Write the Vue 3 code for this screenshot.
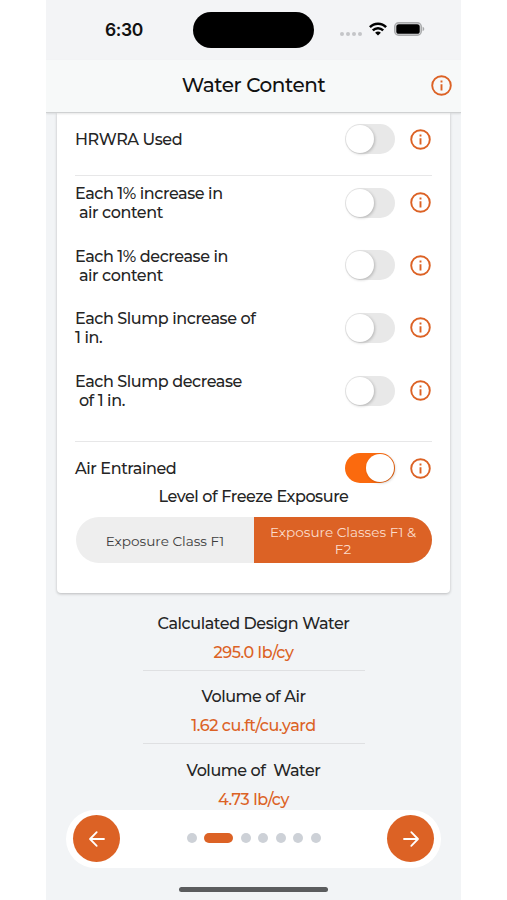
<script setup>
const groups = [
  { name: 'first', rows: [{ lines: ['HRWRA Used'], on: false }] },
  {
    name: 'adjust',
    rows: [
      { lines: ['Each 1% increase in', ' air content'], on: false },
      { lines: ['Each 1% decrease in', ' air content'], on: false },
      { lines: ['Each Slump increase of', '1 in.'], on: false },
      { lines: ['Each Slump decrease', ' of 1 in.'], on: false },
    ],
  },
  { name: 'air', rows: [{ lines: ['Air Entrained'], on: true }] },
]
const results = [
  { label: 'Calculated Design Water', value: '295.0 lb/cy' },
  { label: 'Volume of Air', value: '1.62 cu.ft/cu.yard' },
  { label: 'Volume of  Water', value: '4.73 lb/cy' },
]
</script>

<template>
  <div class="phone">
    <div class="status">
      <span class="time">6:30</span>
      <div class="island"></div>
      <div class="indicators">
        <span class="cell"><i v-for="n in 4" :key="n"></i></span>
        <svg class="wifi" width="18" height="14" viewBox="0 0 18 14">
          <path d="M.9 5.100C5.200.5 12.800.5 17.100 5.100" fill="none" stroke="#000" stroke-width="2.500" />
          <path d="M3.800 8.400c2.900-2.900 7.500-2.900 10.400 0" fill="none" stroke="#000" stroke-width="2.400" />
          <path d="M6.100 10.700c1.700-1.500 4.100-1.500 5.800 0L9 13.600z" fill="#000" />
        </svg>
        <svg class="battery" width="31" height="14" viewBox="0 0 31 14">
          <rect x=".7" y=".7" width="26.600" height="12.600" rx="4" fill="#d9dadc" stroke="#a9aaac" stroke-width="1.400" />
          <rect x="2.300" y="2.200" width="23.400" height="9.600" rx="2.600" fill="#000" />
          <path d="M28.600 4.800c2.200.7 2.200 3.700 0 4.400z" fill="#a7a8aa" />
        </svg>
      </div>
    </div>

    <header class="header">
      <h1>Water Content</h1>
      <svg class="info" viewBox="0 0 21 21">
        <circle cx="10.500" cy="10.500" r="9.300" />
        <path d="M10.500 9.200v6.200M10.500 5.500v2" />
      </svg>
    </header>

    <main class="main">
      <section class="card">
        <div v-for="g in groups" :key="g.name" class="group" :class="g.name">
          <div v-for="(r, i) in g.rows" :key="i" class="row">
            <div class="label">
              <div v-for="l in r.lines" :key="l">{{ l }}</div>
            </div>
            <div class="toggle" :class="{ on: r.on }"><div class="knob"></div></div>
            <svg class="info" viewBox="0 0 21 21">
              <circle cx="10.500" cy="10.500" r="9.300" />
              <path d="M10.500 9.200v6.200M10.500 5.500v2" />
            </svg>
          </div>
        </div>
        <div class="level">Level of Freeze Exposure</div>
        <div class="segments">
          <div class="segment one">Exposure Class F1</div>
          <div class="segment active">Exposure Classes F1 &amp;<br />F2</div>
        </div>
      </section>

      <section class="results">
        <div v-for="r in results" :key="r.label" class="result">
          <div class="name">{{ r.label }}</div>
          <div class="value">{{ r.value }}</div>
        </div>
      </section>
    </main>

    <nav class="nav">
      <button class="round">
        <svg width="18" height="18" viewBox="0 0 18 18"><path d="M16 9H2.300M8.700 2.200L2 9l6.700 6.800" /></svg>
      </button>
      <div class="dots">
        <i v-for="n in 7" :key="n" :class="{ current: n === 2 }"></i>
      </div>
      <button class="round">
        <svg width="18" height="18" viewBox="0 0 18 18"><path d="M2 9h13.700M9.300 2.200L16 9l-6.700 6.800" /></svg>
      </button>
    </nav>
    <div class="home"></div>
  </div>
</template>

<style>
body {
  background: #fff;
  overflow: hidden;
}
</style>

<style scoped>
* {
  box-sizing: border-box;
}
.phone {
  width: 415px;
  height: 900px;
  margin-left: 46px;
  background: #f2f4f6;
  font-family: Montserrat, Inter, "Liberation Sans", sans-serif;
  color: #252525;
  display: flex;
  flex-direction: column;
  overflow: hidden;
}
.status {
  height: 60px;
  flex: none;
  display: grid;
  grid-template-columns: 147px 121px 1fr;
  align-items: center;
  background: #f3f4f6;
}
.time {
  padding-left: 59px;
  font: 600 17.500px/22px Inter, sans-serif;
  letter-spacing: -0.4px;
  color: #111;
}
.island {
  height: 36px;
  border-radius: 18px;
  background: #000;
}
.indicators {
  display: flex;
  align-items: center;
  padding-left: 26px;
  padding-bottom: 2px;
}
.cell {
  display: flex;
  gap: 2px;
  padding-top: 9px;
  margin-right: 7px;
}
.cell i {
  width: 4px;
  height: 4px;
  border-radius: 50%;
  background: #c4c5c8;
}
.battery {
  margin-left: 7px;
}
.header {
  height: 53px;
  flex: none;
  display: grid;
  grid-template-columns: 1fr auto 1fr;
  align-items: center;
  padding: 0 9px 2px;
  background: #f7f9f9;
  border-bottom: 1px solid #cfd1d2;
  box-shadow: 0 1px 2px rgba(0, 0, 0, 0.1);
  z-index: 1;
}
h1 {
  grid-column: 2;
  margin: 0;
  font-size: 20px;
  font-weight: 500;
  line-height: 24px;
  letter-spacing: -0.45px;
  color: #111;
}
.header .info {
  justify-self: end;
}
.info {
  width: 21px;
  height: 21px;
  flex: none;
  fill: none;
  stroke: #dc6225;
  stroke-width: 1.900;
}
.card {
  height: 480px;
  margin: 0 11px;
  padding: 0 18px;
  background: #fff;
  border-radius: 0 0 4px 4px;
  box-shadow: 0 1px 3px rgba(0, 0, 0, 0.24);
}
.group.first {
  height: 63px;
  padding-top: 11px;
  border-bottom: 1px solid #e7e7e8;
}
.group.adjust {
  height: 266px;
  padding-top: 6.600px;
  border-bottom: 1px solid #e7e7e8;
  display: flex;
  flex-direction: column;
  gap: 22.700px;
}
.group.air {
  padding-top: 11px;
}
.row {
  display: flex;
  align-items: center;
  min-height: 30px;
}
.adjust .row {
  height: 40px;
}
.label {
  flex: 1;
  font-size: 16px;
  font-weight: 500;
  line-height: 19.500px;
  letter-spacing: -0.42px;
  white-space: pre;
  padding-top: 1.500px;
}
.adjust .label {
  line-height: 19px;
  padding-top: 0.500px;
}
.toggle {
  width: 50px;
  height: 30px;
  border-radius: 15px;
  padding: 1px;
  background: #e8e8e8;
  margin-right: 15px;
  display: flex;
}
.row .info {
  margin-right: 1.500px;
}
.toggle.on {
  background: #fb6a0e;
  justify-content: flex-end;
}
.knob {
  width: 28px;
  height: 28px;
  border-radius: 50%;
  background: #fff;
  box-shadow: 1px 1px 3px rgba(0, 0, 0, 0.22);
}
.level {
  margin-top: 3px;
  height: 20px;
  line-height: 22px;
  font-size: 16px;
  font-weight: 500;
  letter-spacing: -0.42px;
  text-align: center;
}
.segments {
  display: grid;
  grid-template-columns: 1fr 1fr;
  height: 46px;
  margin: 11px 0 0 1px;
  border-radius: 23px;
  overflow: hidden;
  background: #eee;
}
.segment {
  display: flex;
  align-items: center;
  justify-content: center;
  text-align: center;
  padding-top: 1.500px;
  font-size: 13.600px;
  line-height: 16.500px;
  color: #3d3d3d;
  white-space: nowrap;
}
.segment.active {
  background: #dc6225;
  color: #fbdccb;
}
.results {
  width: 222px;
  margin: 19px auto 0;
}
.result {
  height: 73.300px;
  text-align: center;
  white-space: pre;
  font-size: 16px;
  font-weight: 500;
  letter-spacing: -0.43px;
  display: flex;
  flex-direction: column;
  align-items: center;
}
.result .name {
  height: 24px;
  line-height: 24px;
}
.result .value {
  margin-top: 5px;
  height: 30px;
  line-height: 24px;
  color: #dc6225;
  align-self: stretch;
  border-bottom: 1px solid #dfe0e2;
}
.main {
  height: 696.500px;
  flex: none;
  overflow: hidden;
}
.nav {
  height: 58px;
  flex: none;
  margin: 0 20px;
  padding: 0 7px;
  border-radius: 29px;
  background: #fff;
  display: flex;
  align-items: center;
  justify-content: space-between;
}
.round {
  width: 47px;
  height: 47px;
  padding: 0;
  border: 0;
  border-radius: 50%;
  background: #dc6225;
  display: flex;
  align-items: center;
  justify-content: center;
}
.round path {
  fill: none;
  stroke: #fff;
  stroke-width: 1.800;
  stroke-linecap: round;
  stroke-linejoin: round;
}
.dots {
  display: flex;
  gap: 7.500px;
  padding-bottom: 1px;
}
.dots i {
  width: 10px;
  height: 10px;
  border-radius: 5px;
  background: #cdd1d7;
}
.dots .current {
  width: 29px;
  background: #dc6225;
}
.home {
  width: 149px;
  height: 5px;
  margin: 19.500px auto 0;
  border-radius: 3px;
  background: #5b5c5e;
}
</style>
